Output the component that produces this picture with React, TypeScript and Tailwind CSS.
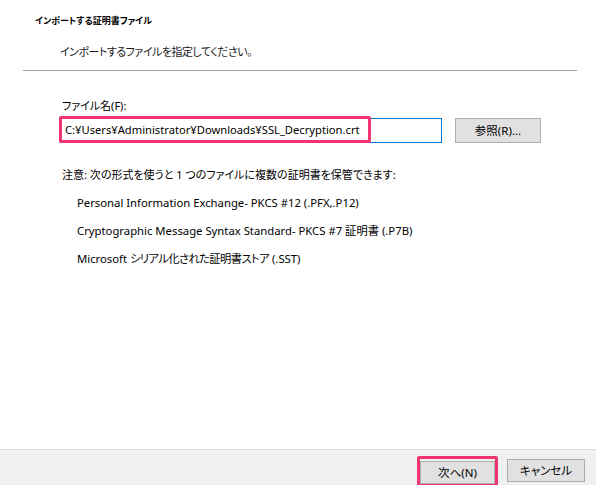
// App.tsx

import React from 'react';

const font = "font-['Noto_Sans','Noto_Sans_CJK_JP',sans-serif] [font-feature-settings:'palt']";

const App: React.FC = () => {
  return (
    <div className={`w-[596px] h-[485px] flex flex-col bg-white text-black ${font}`}>
      <div className="flex-1 flex flex-col">
        {/* Header */}
        <div className="pl-[35px] pt-[14px] text-[9px] leading-[14px] font-bold">インポートする証明書ファイル</div>
        <div className="pl-[60px] pt-[16px] text-[11px] tracking-[-0.5px] leading-[16px] text-[#1a1a1a]">インポートするファイルを指定してください。</div>
        <div className="ml-[23px] mr-[19px] mt-[10px] border-t border-[#a0a0a0]" />

        {/* File name */}
        <div className="pl-[62px] pt-[27px] text-[11px] leading-[16px]">ファイル名(F):</div>
        <div className="flex items-center pl-[60px] mt-[4px]">
          <div className="relative w-[382px] h-[25px] border border-[#0078d7] bg-white flex items-center pl-[4px] text-[11.2px]">
            <span>C:¥Users¥Administrator¥Downloads¥SSL_Decryption.crt</span>
            <div className="absolute left-[-2px] top-[-3px] w-[312px] h-[27px] border-[3px] border-[#f0356f] rounded-[2px]" />
          </div>
          <button className="ml-[13px] w-[86px] h-[25px] bg-[#e1e1e1] border border-[#adadad] text-[11.5px]">参照(R)...</button>
        </div>

        {/* Note */}
        <div className="pl-[62px] pt-[24px] text-[11px] leading-[16px]">注意: 次の形式を使うと 1 つのファイルに複数の証明書を保管できます:</div>
        <div className="pl-[77px] pt-[12px] flex flex-col gap-[12px] text-[11.3px] leading-[16px]">
          <div>Personal Information Exchange- PKCS #12 (.PFX,.P12)</div>
          <div>Cryptographic Message Syntax Standard- PKCS #7 証明書 (.P7B)</div>
          <div>
            Microsoft <span className="tracking-[-0.6px]">シリアル化された証明書ストア</span> (.SST)
          </div>
        </div>
      </div>

      {/* Footer */}
      <div className="h-[36px] bg-[#f0f0f0] border-t border-[#dcdcdc] flex items-start justify-end pr-[11px] pt-[9px] gap-[12px]">
        <div className="relative">
          <button className="w-[75px] h-[23px] bg-[#e1e1e1] border border-[#adadad] text-[11.5px]">次へ(N)</button>
          <div className="absolute left-[-3px] top-[-3px] right-[-3px] bottom-[-3px] border-[3px] border-[#f0356f] rounded-[2px]" />
        </div>
        <button className="w-[78px] h-[23px] bg-[#e1e1e1] border border-[#adadad] text-[11.5px]">キャンセル</button>
      </div>
    </div>
  );
};

export default App;
